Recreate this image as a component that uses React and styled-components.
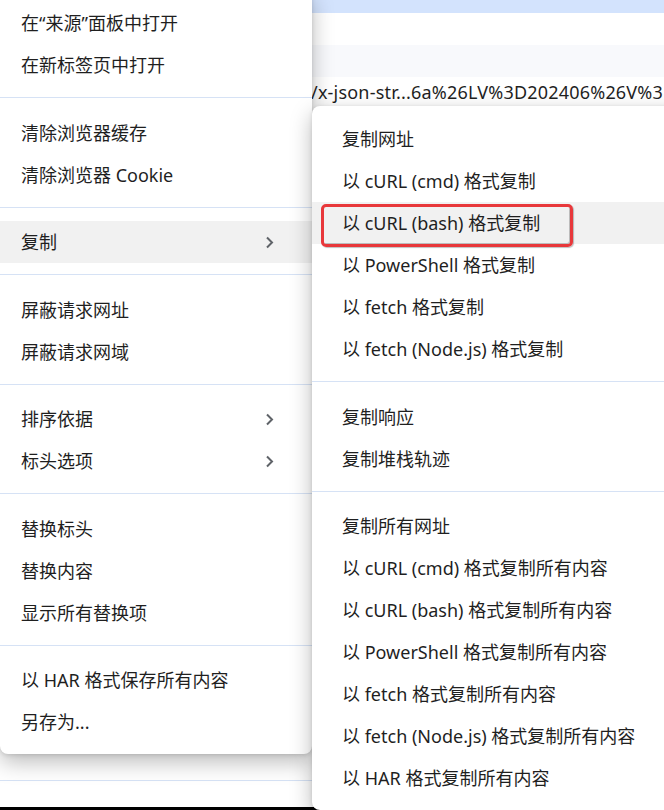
import React from "react";
import styled, { createGlobalStyle } from "styled-components";

const Global = createGlobalStyle`
  html, body { margin: 0; padding: 0; }
  body {
    width: 664px;
    height: 810px;
    overflow: hidden;
    background: #ffffff;
    font-family: "Noto Sans", "Noto Sans CJK SC", sans-serif;
    color: #1f1f1f;
  }
`;

const Stage = styled.div`
  position: relative;
  width: 664px;
  height: 810px;
  overflow: hidden;
`;

/* ---------- background page ---------- */
const Page = styled.div`
  display: flex;
  flex-direction: column;
  height: 810px;
`;

const TopStrip = styled.div`
  height: 13px;
  background: #d3e3fd;
  flex: none;
`;

const BgRow = styled.div`
  height: ${(p) => p.$h}px;
  flex: none;
  background: ${(p) => p.$bg || "#ffffff"};
  border-top: ${(p) => (p.$line ? "1px solid #d6e2f5" : "none")};
  display: flex;
  align-items: center;
  padding-left: 311px;
  font-size: 18px;
  letter-spacing: 0.2px;
  white-space: nowrap;
  overflow: hidden;
`;

const Spacer = styled.div`
  flex: 1;
`;

const Footer = styled.div`
  height: 3px;
  flex: none;
  background: #000000;
`;

/* ---------- menus ---------- */
const Menu = styled.div`
  position: absolute;
  left: ${(p) => p.$left}px;
  top: ${(p) => p.$top}px;
  width: ${(p) => p.$width}px;
  height: ${(p) => p.$height}px;
  box-sizing: border-box;
  padding: 12px 0;
  background: #ffffff;
  border-radius: 8px;
  box-shadow: 0 8px 22px rgba(0, 0, 0, 0.27), 0 1px 4px rgba(0, 0, 0, 0.12);
  display: flex;
  flex-direction: column;
`;

const Item = styled.div`
  position: relative;
  height: 42px;
  flex: none;
  display: flex;
  align-items: center;
  justify-content: space-between;
  padding: 0 38px 0 ${(p) => p.$pad}px;
  font-size: 18px;
  white-space: nowrap;
  background: ${(p) => (p.$active ? "#f1f1f1" : "transparent")};
`;

const Label = styled.span`
  line-height: 42px;
`;

const Separator = styled.div`
  flex: none;
  height: 1px;
  margin: 11px 0 13.5px;
  background: #d6e2f5;
`;

const Highlight = styled.div`
  position: absolute;
  left: 9px;
  top: 2px;
  width: 252px;
  height: 43px;
  box-sizing: border-box;
  border: 3px solid #e8383b;
  border-radius: 5px;
  box-shadow: inset -1px -1px 0 rgba(0, 0, 0, 0.22), 1px 1px 1px rgba(0, 0, 0, 0.25);
  pointer-events: none;
`;

const Chevron = () => (
  <svg width="9" height="13" viewBox="0 0 9 13" aria-hidden="true">
    <path d="M2 1.5 L7 6.5 L2 11.5" fill="none" stroke="#5f6368" strokeWidth="2" />
  </svg>
);

const SEP = "---";

const menu1 = [
  { t: "在“来源”面板中打开" },
  { t: "在新标签页中打开" },
  SEP,
  { t: "清除浏览器缓存" },
  { t: "清除浏览器 Cookie" },
  SEP,
  { t: "复制", sub: true, active: true },
  SEP,
  { t: "屏蔽请求网址" },
  { t: "屏蔽请求网域" },
  SEP,
  { t: "排序依据", sub: true },
  { t: "标头选项", sub: true },
  SEP,
  { t: "替换标头" },
  { t: "替换内容" },
  { t: "显示所有替换项" },
  SEP,
  { t: "以 HAR 格式保存所有内容" },
  { t: "另存为..." },
];

const menu2 = [
  { t: "复制网址" },
  { t: "以 cURL (cmd) 格式复制" },
  { t: "以 cURL (bash) 格式复制", active: true, mark: true },
  { t: "以 PowerShell 格式复制" },
  { t: "以 fetch 格式复制" },
  { t: "以 fetch (Node.js) 格式复制" },
  SEP,
  { t: "复制响应" },
  { t: "复制堆栈轨迹" },
  SEP,
  { t: "复制所有网址" },
  { t: "以 cURL (cmd) 格式复制所有内容" },
  { t: "以 cURL (bash) 格式复制所有内容" },
  { t: "以 PowerShell 格式复制所有内容" },
  { t: "以 fetch 格式复制所有内容" },
  { t: "以 fetch (Node.js) 格式复制所有内容" },
  { t: "以 HAR 格式复制所有内容" },
];

const MenuItems = ({ items, pad }) =>
  items.map((it, i) =>
    it === SEP ? (
      <Separator key={i} />
    ) : (
      <Item key={i} $pad={pad} $active={it.active}>
        <Label>{it.t}</Label>
        {it.sub && <Chevron />}
        {it.mark && <Highlight />}
      </Item>
    )
  );

export default function App() {
  return (
    <Stage>
      <Global />
      <Page>
        <TopStrip />
        <BgRow $h={32} />
        <BgRow $h={32} $bg="#f8f9fc" />
        <BgRow $h={30}>/x-json-str...6a%26LV%3D202406%26V%3</BgRow>
        <Spacer />
        <BgRow $h={26} $line />
        <Footer />
      </Page>

      <Menu $left={0} $top={-10} $width={312} $height={764}>
        <MenuItems items={menu1} pad={21} />
      </Menu>

      <Menu $left={312} $top={106} $width={400} $height={704}>
        <MenuItems items={menu2} pad={30} />
      </Menu>
    </Stage>
  );
}
